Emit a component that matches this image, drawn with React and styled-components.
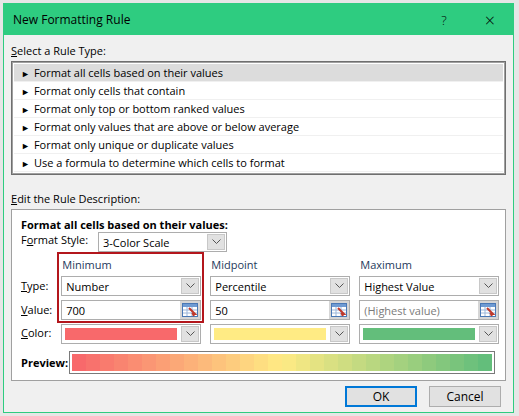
import styled, { createGlobalStyle } from 'styled-components';

const Global = createGlobalStyle`
  body { margin: 0; background: #e6e6e6; font-family: "Open Sans", "Noto Sans", sans-serif; font-size: 11px; color: #000; }
`

const Window = styled.div`
  margin: 3px 0 0 3px;
  width: 509px;
  height: 408px;
  border: 1px solid #2ecc80;
  background: #f0f0f0;
  display: flex;
  flex-direction: column;
`

const TitleBar = styled.div`
  height: 31px;
  background: #2ecc80;
  display: flex;
  align-items: center;
  padding: 0 0 0 9px;
  font-size: 12px;
`

const TitleText = styled.div`flex: 1;`

const TitleBtn = styled.div`
  width: 46px;
  text-align: center;
  font-size: ${({ big }) => big ? '18px' : '13px'};
  font-weight: 300;
`

const Body = styled.div`
  padding: 8px 7px 0 7px;
  display: flex;
  flex-direction: column;
`

const Caption = styled.div`
  height: 18px;
  line-height: 16px;
  u { text-decoration: underline; }
`

const ListBox = styled.div`
  border: 1px solid #6f6f6f;
  outline: 1px solid #a0a0a0;
  outline-offset: -2px;
  background: #fff;
  padding: 2px;
  height: 108px;
  margin-bottom: 16px;
`

const Item = styled.div`
  height: 18px;
  line-height: 17px;
  border-bottom: 1px solid #f0f0f0;
  background: ${({ selected }) => selected ? '#dcdcdc' : '#fff'};
  padding-left: 7px;
  box-sizing: border-box;
  span { font-size: 9px; margin-right: 4px; }
`

const DescBox = styled.div`
  border: 1px solid #a0a0a0;
  background: #fff;
  height: 172px;
  padding: 8px 10px 0 9px;
  box-sizing: border-box;
  display: flex;
  flex-direction: column;
`

const Bold = styled.div`font-weight: 700; line-height: 14px;`

const StyleRow = styled.div`
  display: flex;
  align-items: flex-start;
  gap: 9px;
  margin-bottom: 6px;
`

const Label = styled.div`
  width: ${({ w }) => w || 42}px;
  line-height: 16px;
  flex-shrink: 0;
`

const Select = styled.div`
  width: ${({ w }) => w}px;
  height: 20px;
  border: 1px solid #adadad;
  background: #fff;
  display: flex;
  align-items: center;
  box-sizing: border-box;
  padding-left: 4px;
  color: ${({ muted }) => muted ? '#7a7a7a' : '#000'};
`

const SelText = styled.div`flex: 1; white-space: nowrap; overflow: hidden;`

const Arrow = styled.div`
  width: 18px;
  height: 16px;
  margin-right: 1px;
  background: #e1e1e1;
  border: 1px solid #c8c8c8;
  box-sizing: border-box;
  display: flex;
  align-items: center;
  justify-content: center;
`

const Swatch = styled.div`
  flex: 1;
  height: 12px;
  margin-right: 4px;
  margin-left: -1px;
  background: ${({ c }) => c};
`

const Fields = styled.div`
  display: flex;
  gap: 9px;
`

const Col = styled.div`
  display: flex;
  flex-direction: column;
  gap: 4px;
`

const Framed = styled.div`
  display: flex;
  flex-direction: column;
  gap: 4px;
  position: relative;
`

const RedFrame = styled.div`
  position: absolute;
  left: -4px;
  top: -6px;
  right: -3px;
  bottom: -3px;
  border: 2px solid #b3161c;
  pointer-events: none;
`

const Head = styled.div`
  height: 14px;
  line-height: 14px;
  color: #1e395b;
  padding-left: 1px;
`

const Labels = styled.div`
  width: 33px;
  display: flex;
  flex-direction: column;
  gap: 4px;
  padding-top: 18px;
  div { height: 20px; line-height: 20px; }
  div:last-child { height: 18px; line-height: 18px; }
`

const RefBtn = styled.div`
  width: 20px;
  height: 18px;
  background: #d6d6d6;
  display: flex;
  align-items: center;
  justify-content: center;
`

const PreviewRow = styled.div`
  display: flex;
  align-items: center;
  margin-top: 7px;
  gap: 4px;
`

const PreviewBar = styled.div`
  flex: 1;
  height: 23px;
  border: 1px solid #7a7a7a;
  padding: 2px;
  box-sizing: border-box;
  display: flex;
`

const Band = styled.div`flex: 1;`

const Footer = styled.div`
  display: flex;
  justify-content: flex-end;
  gap: 12px;
  padding: 5px 12px 0 0;
`

const Button = styled.div`
  width: 72px;
  height: 21px;
  box-sizing: border-box;
  border: ${({ primary }) => primary ? '2px solid #0078d7' : '1px solid #adadad'};
  background: #e1e1e1;
  display: flex;
  align-items: center;
  justify-content: center;
  font-size: 12px;
`

const Chevron = () => (
  <svg width="9" height="6" viewBox="0 0 9 6"><path d="M0.5 0.5 L4.5 4.5 L8.5 0.5" fill="none" stroke="#555" strokeWidth="1" /></svg>
)

const RefIcon = () => (
  <svg width="16" height="14" viewBox="0 0 16 14">
    <rect x="0.5" y="0.5" width="15" height="13" fill="#fff" stroke="#4a78b5" />
    <rect x="1" y="1" width="14" height="3" fill="#6f9bd3" />
    <path d="M1 7H15M1 10H15M5 4V13M10 4V13" stroke="#9bb6da" />
    <path d="M7 5 L13 11 L11 11 L12 13" fill="none" stroke="#c0392b" strokeWidth="2" />
  </svg>
)

const Sel = ({ w, text, muted, swatch, picker }) => (
  <Select w={w} muted={muted}>
    {swatch ? <Swatch c={swatch} /> : <SelText>{text}</SelText>}
    {picker ? <RefBtn><RefIcon /></RefBtn> : <Arrow><Chevron /></Arrow>}
  </Select>
)

const items = [
  'Format all cells based on their values',
  'Format only cells that contain',
  'Format only top or bottom ranked values',
  'Format only values that are above or below average',
  'Format only unique or duplicate values',
  'Use a formula to determine which cells to format',
]

const bands = Array.from({ length: 30 }, (_, i) => {
  const t = i / 29
  const lerp = (a, b, u) => a.map((v, k) => Math.round(v + (b[k] - v) * u))
  const c = t < 0.5 ? lerp([248, 105, 107], [255, 235, 132], t * 2) : lerp([255, 235, 132], [99, 190, 123], (t - 0.5) * 2)
  return `rgb(${c.join(',')})`
})

const columns = [
  { head: 'Minimum', type: 'Number', value: '700', color: '#f8696b', framed: true },
  { head: 'Midpoint', type: 'Percentile', value: '50', color: '#ffeb84' },
  { head: 'Maximum', type: 'Highest Value', value: '(Highest value)', muted: true, color: '#63be7b' },
]

export default function App() {
  return (
    <>
      <Global />
      <Window>
        <TitleBar>
          <TitleText>New Formatting Rule</TitleText>
          <TitleBtn>?</TitleBtn>
          <TitleBtn big>×</TitleBtn>
        </TitleBar>
        <Body>
          <Caption><u>S</u>elect a Rule Type:</Caption>
          <ListBox>
            {items.map((t, i) => (
              <Item key={t} selected={i === 0}><span>►</span>{t}</Item>
            ))}
          </ListBox>
          <Caption><u>E</u>dit the Rule Description:</Caption>
          <DescBox>
            <Bold>Format all cells based on their values:</Bold>
            <StyleRow>
              <Label w={68}>F<u>o</u>rmat Style:</Label>
              <Sel w={129} text="3-Color Scale" />
            </StyleRow>
            <Fields>
              <Labels>
                <div><u>T</u>ype:</div>
                <div><u>V</u>alue:</div>
                <div><u>C</u>olor:</div>
              </Labels>
              {columns.map(c => (
                <Col key={c.head}>
                  <Framed>
                    {c.framed && <RedFrame />}
                    <Head>{c.head}</Head>
                    <Sel w={140} text={c.type} />
                    <Sel w={140} text={c.value} muted={c.muted} picker />
                  </Framed>
                  <Sel w={140} swatch={c.color} />
                </Col>
              ))}
            </Fields>
            <PreviewRow>
              <Bold style={{ width: 44 }}>Preview:</Bold>
              <PreviewBar>
                {bands.map((b, i) => <Band key={i} style={{ background: b }} />)}
              </PreviewBar>
            </PreviewRow>
          </DescBox>
        </Body>
        <Footer>
          <Button primary>OK</Button>
          <Button>Cancel</Button>
        </Footer>
      </Window>
    </>
  )
}
